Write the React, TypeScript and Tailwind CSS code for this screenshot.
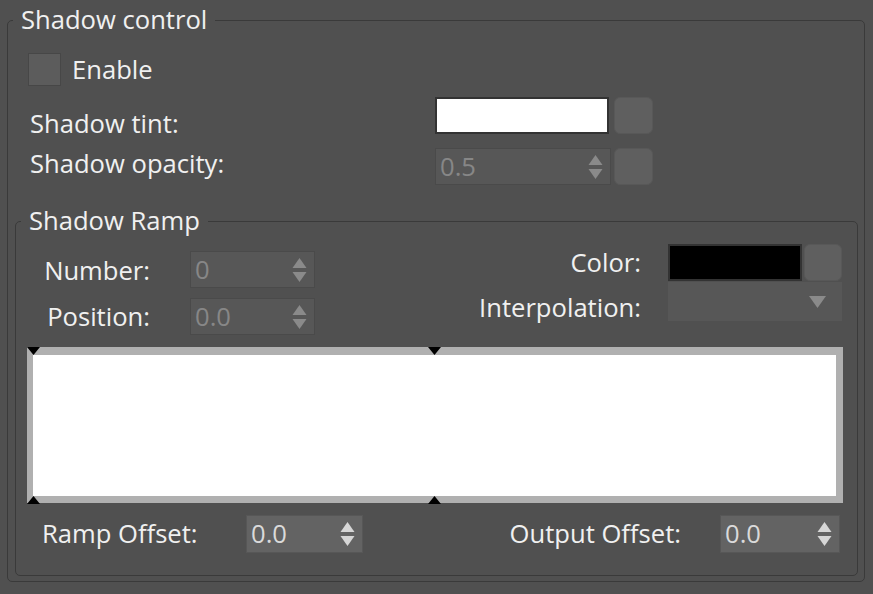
import React from "react";

function Arrows({ color }: { color: string }) {
  return (
    <svg width="15" height="26" viewBox="0 0 15 26" className="shrink-0">
      <path d="M7.5 1L14.5 11H0.5Z" fill={color} />
      <path d="M0.5 15H14.5L7.5 25Z" fill={color} />
    </svg>
  );
}

function Spinner({ value, className, enabled }: { value: string; className: string; enabled?: boolean }) {
  return (
    <div
      className={`flex items-center justify-between border pl-[4px] pr-[7px] ${
        enabled
          ? "border-[#575757] bg-[#636363] text-[#dadada]"
          : "border-[#4a4a4a] bg-[#575757] text-[#878787]"
      } ${className}`}
    >
      <span>{value}</span>
      <Arrows color={enabled ? "#d6d6d6" : "#8a8a8a"} />
    </div>
  );
}

function SwatchButton({ className }: { className: string }) {
  return <div className={`rounded-[6px] border border-[#585858] bg-[#5f5f5f] ${className}`} />;
}

function Marker({ className, up }: { className: string; up?: boolean }) {
  return (
    <svg className={`absolute ${className}`} width="13" height="8" viewBox="0 0 13 8">
      <path d={up ? "M6.5 0L13 8H0Z" : "M0 0H13L6.5 8Z"} fill="#000" />
    </svg>
  );
}

export default function App() {
  return (
    <div className="h-[594px] w-[873px] overflow-hidden bg-[#505050] pl-[7px] pt-[3px] font-['Open_Sans',sans-serif] text-[25.6px] leading-[34px] text-[#f0f0f0]">
      <fieldset className="w-[858px] rounded-[5px] border border-[#3a3a3a] pb-[5px]">
        <legend className="ml-[5px] px-[8px]">Shadow control</legend>

        <div className="ml-[20px] mt-[16px] flex h-[33px] items-center gap-[11px]">
          <div className="h-[33px] w-[33px] border border-[#474747] bg-[#5c5c5c]" />
          <span>Enable</span>
        </div>

        <div className="mt-[11px] flex">
          <div className="ml-[22px] flex w-[405px] flex-col gap-[6px] pt-[10px]">
            <span>Shadow tint:</span>
            <span>Shadow opacity:</span>
          </div>
          <div className="flex flex-col gap-[14px]">
            <div className="flex gap-[5px]">
              <div className="h-[37px] w-[174px] border-2 border-[#333333] bg-white" />
              <SwatchButton className="h-[37px] w-[39px]" />
            </div>
            <div className="flex gap-[3px]">
              <Spinner value="0.5" className="h-[37px] w-[176px]" />
              <SwatchButton className="h-[37px] w-[39px]" />
            </div>
          </div>
        </div>

        <fieldset className="ml-[7px] mt-[19px] w-[843px] rounded-[5px] border border-[#3a3a3a] pb-[22px]">
          <legend className="ml-[5px] px-[8px]">Shadow Ramp</legend>

          <div className="flex justify-between pr-[15px]">
            <div className="mt-[13px] flex flex-col gap-[10px]">
              <div className="flex h-[37px] items-center">
                <span className="mt-[2px] w-[134px] text-right">Number:</span>
                <Spinner value="0" className="ml-[40px] h-[37px] w-[125px]" />
              </div>
              <div className="flex h-[37px] items-center">
                <span className="w-[134px] text-right">Position:</span>
                <Spinner value="0.0" className="ml-[40px] h-[37px] w-[125px]" />
              </div>
            </div>
            <div className="mt-[6px] flex flex-col items-end gap-[1px]">
              <div className="flex h-[37px] items-center">
                <span className="mr-[27px]">Color:</span>
                <div className="h-[37px] w-[134px] border-2 border-[#333333] bg-black" />
                <SwatchButton className="ml-[2px] h-[37px] w-[38px]" />
              </div>
              <div className="flex h-[39px] items-center">
                <span className="mr-[27px] mt-[12px]">Interpolation:</span>
                <div className="flex h-[39px] w-[174px] items-center justify-end bg-[#575757] pr-[16px]">
                  <svg width="17" height="12" viewBox="0 0 17 12">
                    <path d="M0 0H17L8.5 12Z" fill="#8a8a8a" />
                  </svg>
                </div>
              </div>
            </div>
          </div>

          <div className="relative ml-[11px] mt-[12px] h-[156px] w-[816px] border-b-[7px] border-l-[6px] border-r-[7px] border-t-[8px] border-[#b0b0b0] bg-white">
            <Marker className="left-[-6px] top-[-8px]" />
            <Marker className="left-[395px] top-[-8px]" />
            <Marker up className="left-[-6px] top-[141px]" />
            <Marker up className="left-[395px] top-[141px]" />
          </div>

          <div className="mt-[12px] flex h-[38px] items-center justify-between pr-[17px]">
            <div className="ml-[26px] flex items-center">
              <span className="w-[204px]">Ramp Offset:</span>
              <Spinner enabled value="0.0" className="h-[38px] w-[117px]" />
            </div>
            <div className="flex items-center">
              <span className="mr-[39px]">Output Offset:</span>
              <Spinner enabled value="0.0" className="h-[38px] w-[120px]" />
            </div>
          </div>
        </fieldset>
      </fieldset>
    </div>
  );
}
